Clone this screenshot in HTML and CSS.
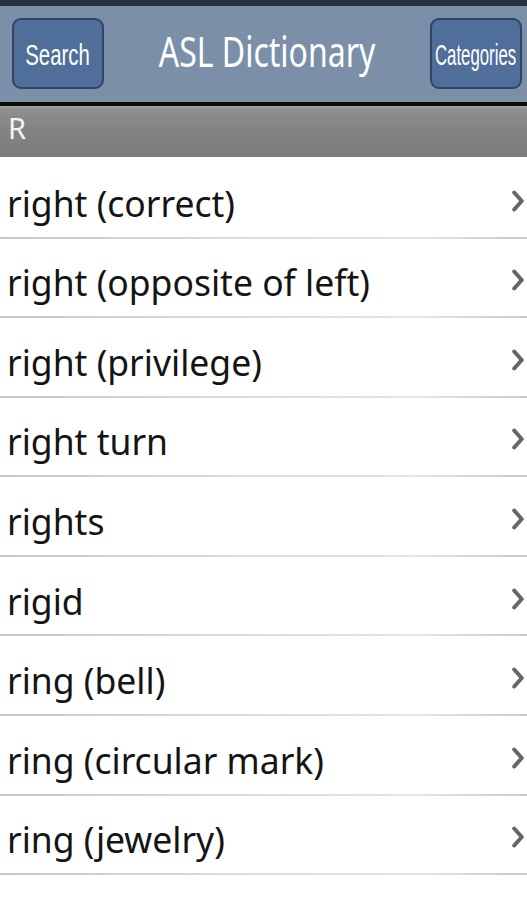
FILE: index.html
```html
<!DOCTYPE html>
<html>
<head>
<meta charset="utf-8">
<link rel="stylesheet" href="styles.css">
</head>
<body>
<div class="app">
  <div class="topstrip"></div>
  <header class="header">
    <button class="btn btn-search"><span class="btn-text">Search</span></button>
    <h1 class="title"><span class="title-text">ASL Dictionary</span></h1>
    <button class="btn btn-cat"><span class="btn-text">Categories</span></button>
  </header>
  <div class="section">R</div>
  <ul class="list">
    <li class="row"><span class="label">right (correct)</span><svg class="chev" viewBox="0 0 12 22"><path d="M2.2 2.5 L9.8 11 L2.2 19.5" /></svg></li>
    <li class="row"><span class="label">right (opposite of left)</span><svg class="chev" viewBox="0 0 12 22"><path d="M2.2 2.5 L9.8 11 L2.2 19.5" /></svg></li>
    <li class="row"><span class="label">right (privilege)</span><svg class="chev" viewBox="0 0 12 22"><path d="M2.2 2.5 L9.8 11 L2.2 19.5" /></svg></li>
    <li class="row"><span class="label">right turn</span><svg class="chev" viewBox="0 0 12 22"><path d="M2.2 2.5 L9.8 11 L2.2 19.5" /></svg></li>
    <li class="row"><span class="label">rights</span><svg class="chev" viewBox="0 0 12 22"><path d="M2.2 2.5 L9.8 11 L2.2 19.5" /></svg></li>
    <li class="row"><span class="label">rigid</span><svg class="chev" viewBox="0 0 12 22"><path d="M2.2 2.5 L9.8 11 L2.2 19.5" /></svg></li>
    <li class="row"><span class="label">ring (bell)</span><svg class="chev" viewBox="0 0 12 22"><path d="M2.2 2.5 L9.8 11 L2.2 19.5" /></svg></li>
    <li class="row"><span class="label">ring (circular mark)</span><svg class="chev" viewBox="0 0 12 22"><path d="M2.2 2.5 L9.8 11 L2.2 19.5" /></svg></li>
    <li class="row"><span class="label">ring (jewelry)</span><svg class="chev" viewBox="0 0 12 22"><path d="M2.2 2.5 L9.8 11 L2.2 19.5" /></svg></li>
  </ul>
</div>
</body>
</html>
```
FILE: styles.css
```css
* { box-sizing: border-box; }
html, body { margin: 0; padding: 0; background: #ffffff; }
body { font-family: "Noto Sans", "Open Sans", sans-serif; width: 527px; height: 900px; overflow: hidden; }
.app { display: flex; flex-direction: column; }
.topstrip { height: 6px; background: #26313f; }
.header {
  height: 100px;
  background: #7b8fa9;
  display: flex;
  align-items: center;
  justify-content: space-between;
  padding: 0 5px 0 12px;
  border-bottom: 4px solid #0c0c0c;
}
.btn {
  width: 92px;
  height: 71px;
  background: #4f6e99;
  border: 2px solid #2e4564;
  border-radius: 9px;
  color: #ffffff;
  font-family: "Liberation Sans", Arial, sans-serif;
  font-size: 30px;
  padding: 0;
  margin-top: -1px;
  display: flex;
  align-items: center;
  justify-content: center;
  overflow: hidden;
}
.btn-text { display: inline-block; white-space: nowrap; line-height: 1; padding-top: 2px; }
.btn-search .btn-text { transform: scaleX(0.68); }
.btn-cat .btn-text { transform: scaleX(0.56); }
.title {
  margin: 0;
  font-weight: normal;
  color: #ffffff;
  font-size: 32px;
  flex: 1;
  text-align: center;
  margin-top: -7px;
}
.title-text { display: inline-block; transform: scaleY(1.3); line-height: 1; }
.section {
  height: 51px;
  background: linear-gradient(#a3a3a3 0px, #8e8e8e 3px, #858585 40%, #7b7b7b 100%);
  color: #f4f4f4;
  font-size: 29px;
  padding: 4px 0 0 8px;
  line-height: 36px;
}
.list { list-style: none; margin: 0; padding: 0; }
.row {
  height: 79.6px;
  display: flex;
  align-items: center;
  justify-content: space-between;
  border-bottom: 2px solid transparent;
  border-image: linear-gradient(to right, #c6c6c6, #dadada 40%, #e4e4e4 80%, #c9c9c9) 1;
  padding: 6px 3px 0 7px;
}
.row:first-child { height: 81.5px; padding-top: 8px; }
.label { font-size: 35.5px; color: #141414; padding-top: 4px; }
.chev { width: 12px; height: 22px; }
.chev path { fill: none; stroke: #666666; stroke-width: 4; stroke-linecap: round; stroke-linejoin: round; }
```
